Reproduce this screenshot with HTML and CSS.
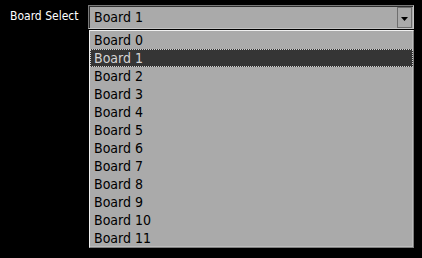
FILE: index.html
```html
<!DOCTYPE html>
<html>
<head>
<meta charset="utf-8">
<link rel="stylesheet" href="styles.css">
</head>
<body>
<div class="field">
  <label class="label">Board Select</label>
  <div class="combo">
    <div class="select">
      <span class="value">Board 1</span>
      <span class="btn"><svg width="7" height="4" viewBox="0 0 7 4"><path d="M0 0H7L3.5 4Z" fill="#000"/></svg></span>
    </div>
    <ul class="list">
      <li class="item">Board 0</li>
      <li class="item selected">Board 1</li>
      <li class="item">Board 2</li>
      <li class="item">Board 3</li>
      <li class="item">Board 4</li>
      <li class="item">Board 5</li>
      <li class="item">Board 6</li>
      <li class="item">Board 7</li>
      <li class="item">Board 8</li>
      <li class="item">Board 9</li>
      <li class="item">Board 10</li>
      <li class="item">Board 11</li>
    </ul>
  </div>
</div>
</body>
</html>
```
FILE: styles.css
```css
html, body {
  margin: 0;
  padding: 0;
  background: #000;
}
.field {
  display: flex;
  align-items: flex-start;
  padding: 5px 0 0 10px;
  font-family: "DejaVu Sans Condensed", "DejaVu Sans", sans-serif;
}
.label {
  width: 78px;
  color: #fff;
  font-size: 12px;
  line-height: 23px;
}
.combo {
  width: 326px;
  display: flex;
  flex-direction: column;
}
.select {
  box-sizing: border-box;
  height: 24px;
  display: flex;
  align-items: stretch;
  background: #aaa;
  border: 1px solid;
  border-color: #7a7a7a #c4c4c4 #c4c4c4 #7a7a7a;
  box-shadow: inset 1px 1px 0 #2e2e2e;
}
.value {
  flex: 1;
  padding-left: 5px;
  font-size: 14px;
  line-height: 22px;
  color: #000;
}
.btn {
  box-sizing: border-box;
  width: 15px;
  margin: 1px 1px 0 0;
  border: 1px solid #6e6e6e;
  display: flex;
  align-items: center;
  justify-content: center;
  padding-top: 3px;
}
.btn svg {
  display: block;
}
.list {
  list-style: none;
  margin: 1px 0 0 1px;
  padding: 0;
  width: 325px;
  box-sizing: border-box;
  background: #aaa;
  border: 1px solid;
  border-color: #f0f0f0 #7e7e7e #7e7e7e #f0f0f0;
  box-shadow: inset -1px -1px 0 #bcbcbc;
}
.item {
  height: 18px;
  box-sizing: border-box;
  border: 1px solid transparent;
  padding-left: 3px;
  font-size: 14px;
  line-height: 16px;
  color: #000;
}
.item.selected {
  background: #353535;
  color: #d4d4d4;
  border: 1px dotted #cfcfcf;
}
```
